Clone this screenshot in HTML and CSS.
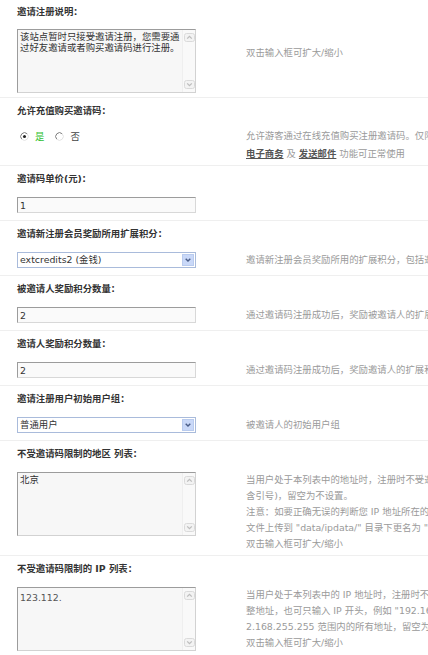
FILE: index.html
```html
<!DOCTYPE html>
<html lang="zh-CN">
<head>
<meta charset="utf-8">
<title>邀请注册设置</title>
<link rel="stylesheet" href="styles.css">
</head>
<body>
<div class="page">

  <section class="group group-first">
    <div class="label">邀请注册说明：</div>
    <div class="row row-tall">
      <div class="field">
        <div class="textarea">
          <textarea class="ta-input" readonly>该站点暂时只接受邀请注册，您需要通过好友邀请或者购买邀请码进行注册。</textarea>
          <div class="scrollbar">
            <svg class="sb-btn" width="11" height="9" viewBox="0 0 11 9"><rect x="0.5" y="0.5" width="10" height="8" rx="2" fill="#f3f3f3" stroke="#dadada"/><path d="M3.2 5.6 L5.5 3.3 L7.8 5.6" fill="none" stroke="#bdbdbd" stroke-width="1.3"/></svg>
            <svg class="sb-btn" width="11" height="9" viewBox="0 0 11 9"><rect x="0.5" y="0.5" width="10" height="8" rx="2" fill="#f3f3f3" stroke="#dadada"/><path d="M3.2 3.4 L5.5 5.7 L7.8 3.4" fill="none" stroke="#bdbdbd" stroke-width="1.3"/></svg>
          </div>
        </div>
      </div>
      <div class="tips tips-second">双击输入框可扩大/缩小</div>
    </div>
  </section>

  <section class="group">
    <div class="label">允许充值购买邀请码：</div>
    <div class="row row-radio">
      <div class="field">
        <div class="radios">
          <label class="radio checked"><svg width="9" height="9" viewBox="0 0 10 10"><circle cx="5" cy="5" r="4.4" fill="#fff"/><path d="M2 8 A4.24 4.24 0 0 1 8 2" fill="none" stroke="#7a7a7a" stroke-width="1.1"/><path d="M8 2 A4.24 4.24 0 0 1 2 8" fill="none" stroke="#e2e2e2" stroke-width="1.1"/><circle cx="5" cy="5" r="1.7" fill="#222"/></svg>是</label>
          <label class="radio"><svg width="9" height="9" viewBox="0 0 10 10"><circle cx="5" cy="5" r="4.4" fill="#fff"/><path d="M2 8 A4.24 4.24 0 0 1 8 2" fill="none" stroke="#7a7a7a" stroke-width="1.1"/><path d="M8 2 A4.24 4.24 0 0 1 2 8" fill="none" stroke="#e2e2e2" stroke-width="1.1"/></svg>否</label>
        </div>
      </div>
      <div class="tips tips-loose">允许游客通过在线充值购买注册邀请码。仅限开启<br><a class="tip-link" href="#">电子商务</a> 及 <a class="tip-link" href="#">发送邮件</a> 功能可正常使用</div>
    </div>
  </section>

  <section class="group">
    <div class="label">邀请码单价(元)：</div>
    <div class="row">
      <div class="field"><input class="input" type="text" value="1" readonly></div>
      <div class="tips"></div>
    </div>
  </section>

  <section class="group">
    <div class="label">邀请新注册会员奖励所用扩展积分：</div>
    <div class="row">
      <div class="field">
        <div class="select">
          <span class="select-text">extcredits2 (金钱)</span>
          <span class="select-btn"><svg width="6" height="4" viewBox="0 0 6 4"><path d="M0.7 0.7 L3 3 L5.3 0.7" fill="none" stroke="#4a5d88" stroke-width="1.4"/></svg></span>
        </div>
      </div>
      <div class="tips">邀请新注册会员奖励所用的扩展积分，包括邀请人和被邀请人</div>
    </div>
  </section>

  <section class="group">
    <div class="label">被邀请人奖励积分数量：</div>
    <div class="row">
      <div class="field"><input class="input" type="text" value="2" readonly></div>
      <div class="tips">通过邀请码注册成功后，奖励被邀请人的扩展积分数量</div>
    </div>
  </section>

  <section class="group">
    <div class="label">邀请人奖励积分数量：</div>
    <div class="row">
      <div class="field"><input class="input" type="text" value="2" readonly></div>
      <div class="tips">通过邀请码注册成功后，奖励邀请人的扩展积分数量</div>
    </div>
  </section>

  <section class="group">
    <div class="label">邀请注册用户初始用户组：</div>
    <div class="row">
      <div class="field">
        <div class="select">
          <span class="select-text">普通用户</span>
          <span class="select-btn"><svg width="6" height="4" viewBox="0 0 6 4"><path d="M0.7 0.7 L3 3 L5.3 0.7" fill="none" stroke="#4a5d88" stroke-width="1.4"/></svg></span>
        </div>
      </div>
      <div class="tips">被邀请人的初始用户组</div>
    </div>
  </section>

  <section class="group">
    <div class="label">不受邀请码限制的地区 列表：</div>
    <div class="row row-tall">
      <div class="field">
        <div class="textarea">
          <textarea class="ta-input" readonly>北京</textarea>
          <div class="scrollbar">
            <svg class="sb-btn" width="11" height="9" viewBox="0 0 11 9"><rect x="0.5" y="0.5" width="10" height="8" rx="2" fill="#f3f3f3" stroke="#dadada"/><path d="M3.2 5.6 L5.5 3.3 L7.8 5.6" fill="none" stroke="#bdbdbd" stroke-width="1.3"/></svg>
            <svg class="sb-btn" width="11" height="9" viewBox="0 0 11 9"><rect x="0.5" y="0.5" width="10" height="8" rx="2" fill="#f3f3f3" stroke="#dadada"/><path d="M3.2 3.4 L5.5 5.7 L7.8 3.4" fill="none" stroke="#bdbdbd" stroke-width="1.3"/></svg>
          </div>
        </div>
      </div>
      <div class="tips">当用户处于本列表中的地址时，注册时不受邀请码限制。每个地区一行，例如 "北京"(不<br>含引号)，留空为不设置。<br>注意：如要正确无误的判断您 IP 地址所在的地区，请到网上下载 QQ IP 数据库，将 "wry.dat"<br>文件上传到 "data/ipdata/" 目录下更名为 "wry.dat" 即可<br>双击输入框可扩大/缩小</div>
    </div>
  </section>

  <section class="group">
    <div class="label">不受邀请码限制的 IP 列表：</div>
    <div class="row row-tall">
      <div class="field">
        <div class="textarea">
          <textarea class="ta-input ta-latin" readonly>123.112.</textarea>
          <div class="scrollbar">
            <svg class="sb-btn" width="11" height="9" viewBox="0 0 11 9"><rect x="0.5" y="0.5" width="10" height="8" rx="2" fill="#f3f3f3" stroke="#dadada"/><path d="M3.2 5.6 L5.5 3.3 L7.8 5.6" fill="none" stroke="#bdbdbd" stroke-width="1.3"/></svg>
            <svg class="sb-btn" width="11" height="9" viewBox="0 0 11 9"><rect x="0.5" y="0.5" width="10" height="8" rx="2" fill="#f3f3f3" stroke="#dadada"/><path d="M3.2 3.4 L5.5 5.7 L7.8 3.4" fill="none" stroke="#bdbdbd" stroke-width="1.3"/></svg>
          </div>
        </div>
      </div>
      <div class="tips">当用户处于本列表中的 IP 地址时，注册时不受邀请码限制。每个 IP 一行，既可输入完<br>整地址，也可只输入 IP 开头，例如 "192.168."(不含引号) 可匹配 192.168.0.0～19<br>2.168.255.255 范围内的所有地址，留空为不设置<br>双击输入框可扩大/缩小</div>
    </div>
  </section>

</div>
</body>
</html>
```

FILE: styles.css
```css
html, body {
  margin: 0;
  padding: 0;
  overflow: hidden;
  background: #fff;
}

body {
  font-family: "DejaVu Sans", "Noto Sans CJK SC", sans-serif;
  font-size: 9.4px;
  color: #333;
}

.page {
  width: 780px;
}

.group {
  border-top: 1px solid #efefef;
}

.group-first {
  border-top: 0;
}

.label {
  height: 26px;
  line-height: 26px;
  padding-left: 17px;
  font-weight: bold;
  color: #333;
  white-space: nowrap;
}

.group-first .label {
  height: 24px;
  line-height: 24px;
}

.row {
  display: flex;
  align-items: flex-start;
  padding: 5px 0 7px;
}

.row-tall {
  padding-bottom: 3px;
}

.group-first .row {
  padding-bottom: 4px;
}

.row-radio {
  padding: 3px 0 2px;
}

.field {
  flex: none;
  width: 179px;
  margin-left: 17px;
}

.tips {
  margin-left: 50px;
  line-height: 16px;
  color: #9a9a9a;
  white-space: nowrap;
}

.tips-second {
  padding-top: 16px;
}

.tips-loose {
  line-height: 18px;
}

.tip-link {
  color: #555;
  font-weight: bold;
  text-decoration: underline;
}

/* text input */
.input {
  display: block;
  box-sizing: border-box;
  width: 100%;
  height: 16px;
  margin: 0;
  padding: 0 2px;
  border: 1px solid;
  border-color: #9c9c9c #d8d8d8 #d8d8d8 #9c9c9c;
  background: #fafafa;
  font: inherit;
  line-height: 14px;
  color: #333;
  outline: none;
}

/* textarea with classic scrollbar */
.textarea {
  display: flex;
  box-sizing: border-box;
  height: 64px;
  border: 1px solid;
  border-color: #9c9c9c #d2d2d2 #d2d2d2 #9c9c9c;
  background: #f7f7f7;
}

.ta-input {
  flex: 1;
  min-width: 0;
  margin: 0;
  padding: 1px 2px 0;
  border: 0;
  background: transparent;
  font: inherit;
  line-height: 11px;
  color: #333;
  resize: none;
  overflow: hidden;
  outline: none;
}

.ta-latin {
  padding-top: 4px;
  color: #555;
}

.scrollbar {
  flex: none;
  box-sizing: border-box;
  width: 13px;
  padding: 3px 0;
  display: flex;
  flex-direction: column;
  justify-content: space-between;
  align-items: center;
  border-left: 1px solid #efefef;
  background: #f9f9f9;
}

.sb-btn {
  display: block;
}

/* select */
.select {
  display: flex;
  align-items: center;
  box-sizing: border-box;
  height: 16px;
  padding: 1px;
  border: 1px solid #a9bbdb;
  background: #fff;
}

.select-text {
  flex: 1;
  padding-left: 1px;
  line-height: 12px;
  color: #333;
  white-space: nowrap;
}

.select-btn {
  flex: none;
  box-sizing: border-box;
  width: 12px;
  height: 12px;
  display: flex;
  align-items: center;
  justify-content: center;
  border: 1px solid #b9cbee;
  background: #c9d8f8;
}

/* radios */
.radios {
  display: flex;
  align-items: center;
  gap: 11px;
  height: 18px;
  padding-left: 3px;
}

.radio {
  display: flex;
  align-items: center;
  gap: 6px;
  color: #444;
}

.radio.checked {
  color: #2fbf2f;
}
```
